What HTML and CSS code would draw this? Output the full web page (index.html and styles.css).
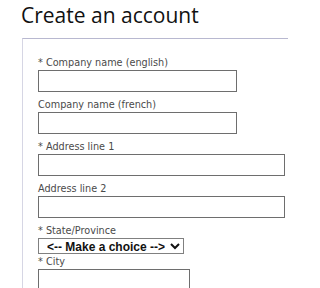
FILE: index.html
```html
<!DOCTYPE html>
<html>
<head>
<meta charset="utf-8">
<link rel="stylesheet" href="styles.css">
</head>
<body>
<div class="page">
<h1 class="title">Create an account</h1>
<fieldset class="box">
  <label class="lbl">* Company name (english)</label>
  <input class="txt w-md" type="text">
  <label class="lbl">Company name (french)</label>
  <input class="txt w-md" type="text">
  <label class="lbl">* Address line 1</label>
  <input class="txt w-lg" type="text">
  <label class="lbl">Address line 2</label>
  <input class="txt w-lg" type="text">
  <label class="lbl">* State/Province</label>
  <select class="sel"><option>&lt;-- Make a choice --&gt;</option></select>
  <label class="lbl">* City</label>
  <input class="txt w-sm" type="text">
</fieldset>
</div>
</body>
</html>
```
FILE: styles.css
```css
html, body {
  margin: 0;
  padding: 0;
  background: #ffffff;
}
.page {
  width: 288px;
  height: 288px;
  overflow: hidden;
}
.title {
  margin: 0 0 9px 21px;
  padding-top: 1px;
  font-family: "Open Sans", sans-serif;
  font-size: 21px;
  font-weight: 500;
  line-height: 28px;
  color: #111111;
  white-space: nowrap;
}
.box {
  margin: 0 0 0 22px;
  padding: 17px 0 0 15px;
  width: 280px;
  min-width: 0;
  border: 1px solid #d6d6e4;
  border-top-color: #b8b8d0;
  display: flex;
  flex-direction: column;
  align-items: flex-start;
}
.lbl {
  display: block;
  height: 14px;
  line-height: 14px;
  font-family: "DejaVu Sans", Verdana, sans-serif;
  font-size: 9.7px;
  color: #4a4a4a;
  white-space: nowrap;
}
.txt {
  box-sizing: border-box;
  height: 22px;
  margin: 0 0 6px 0;
  border: 1px solid #6e6e6e;
  background: #ffffff;
  padding: 0;
}
.w-md { width: 199px; }
.w-lg { width: 247px; }
.w-sm { width: 152px; }
.sel {
  box-sizing: border-box;
  width: 146px;
  height: 16px;
  margin: 0 0 1px 0;
  border: 1px solid #808080;
  border-radius: 0;
  background: #ffffff;
  font-family: "Liberation Sans", Arial, sans-serif;
  font-size: 12px;
  font-weight: 700;
  color: #111111;
  padding: 0 0 0 4px;
}
```
